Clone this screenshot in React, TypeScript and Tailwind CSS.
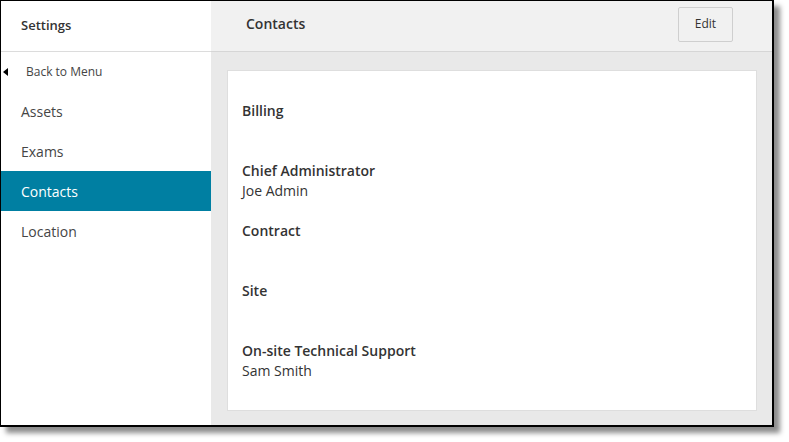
import { ReactNode } from 'react';

const NAV_ITEMS = ['Assets', 'Exams', 'Contacts', 'Location'];

const CONTACTS: { label: string; name?: string }[] = [
  { label: 'Billing' },
  { label: 'Chief Administrator', name: 'Joe Admin' },
  { label: 'Contract' },
  { label: 'Site' },
  { label: 'On-site Technical Support', name: 'Sam Smith' },
];

function NavItem({ children, active }: { children: ReactNode; active?: boolean }) {
  return (
    <div
      className={`h-10 flex items-center pl-5 text-[14px] ${
        active ? 'bg-[#007fa2] text-white' : 'text-[#454545]'
      }`}>
      {children}
    </div>
  );
}

function ContactBlock({ label, name }: { label: string; name?: string }) {
  return (
    <div className="mb-5">
      <h4 className="text-[14px] leading-5 font-semibold text-[#333]">{label}</h4>
      <p className="h-5 text-[14px] leading-5 text-[#333]">{name ?? ''}</p>
    </div>
  );
}

export default function App() {
  return (
    <div className="w-[789px] h-[442px] bg-white font-['Open_Sans',sans-serif]">
      <div className="w-[774px] h-[427px] flex border-t border-l border-r-2 border-b-2 border-black shadow-[6px_6px_5px_rgba(0,0,0,0.45)]">
        {/* Sidebar */}
        <aside className="w-[210px] shrink-0 bg-white flex flex-col">
          <div className="h-[51px] flex items-center pl-5 border-b border-[#dcdcdc] text-[13px] font-semibold text-[#333]">
            Settings
          </div>
          <div className="h-[39px] flex items-center text-[12px] text-[#454545] relative">
            <span className="absolute left-[2px] top-[16px] w-0 h-0 border-y-[4px] border-y-transparent border-r-[5px] border-r-black" />
            <span className="pl-[25px]">Back to Menu</span>
          </div>
          {NAV_ITEMS.map((item) => (
            <NavItem key={item} active={item === 'Contacts'}>
              {item}
            </NavItem>
          ))}
        </aside>

        {/* Main */}
        <main className="flex-1 flex flex-col bg-[#e9e9e9]">
          <div className="h-[51px] shrink-0 flex items-center justify-between bg-[#f1f1f1] border-b border-[#d6d6d6] pl-[35px] pr-[39px]">
            <h1 className="text-[14px] font-semibold text-[#333] -mt-[5px]">Contacts</h1>
            <button
              type="button"
              className="w-[55px] h-[35px] -mt-[4px] bg-[#f1f1f1] border border-[#cfcfcf] rounded-[2px] text-[12px] text-[#333]">
              Edit
            </button>
          </div>
          <div className="flex-1 pt-[18px] pl-4 pr-[15px] pb-[14px]">
            <div className="h-full bg-white border border-[#dedede] pt-[30px] pl-[14px]">
              {CONTACTS.map((c) => (
                <ContactBlock key={c.label} label={c.label} name={c.name} />
              ))}
            </div>
          </div>
        </main>
      </div>
    </div>
  );
}
